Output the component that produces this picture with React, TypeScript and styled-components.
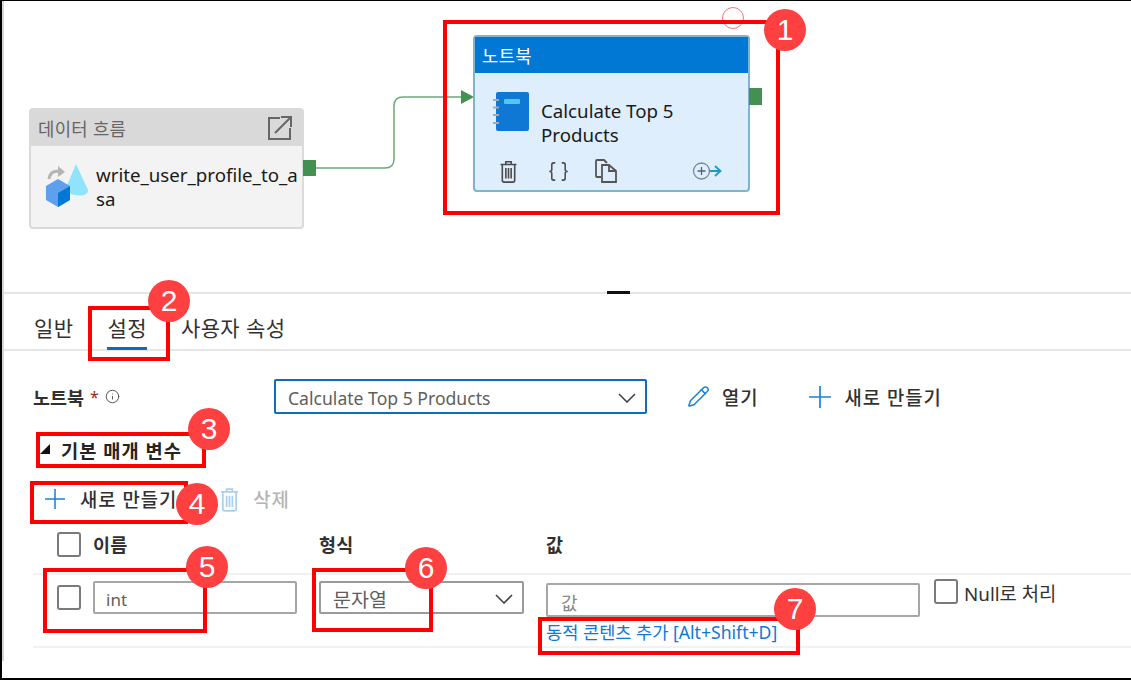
import React from "react";
import styled, { createGlobalStyle } from "styled-components";
import { Braces, Info, Pencil } from "lucide-react";

const FONT = `"Noto Sans", "Noto Sans CJK KR", sans-serif`;

const GlobalStyle = createGlobalStyle`
  html, body {
    margin: 0;
    padding: 0;
    background: #fff;
  }
  body {
    font-family: ${FONT};
    color: #252423;
  }
`;

// 최상단 프레임
const Frame = styled.div`
  position: relative;
  width: 1131px;
  height: 680px;
  box-sizing: border-box;
  border-top: 1px solid #000;
  border-bottom: 2px solid #000;
  border-left: 2px solid #000;
  overflow: hidden;
  background: #fff;
`;

const Inner = styled.div`
  height: 660px;
  border-left: 2px solid #d6d6d6;
`;

// 파이프라인 캔버스
const Canvas = styled.div`
  position: relative;
  height: 291px;
  border-bottom: 2px solid #e6e6e6;
`;

const Wire = styled.svg`
  position: absolute;
  left: -4px;
  top: -1px;
`;

const Splitter = styled.div`
  position: absolute;
  left: 603px;
  bottom: -2px;
  width: 23px;
  height: 3px;
  background: #111;
`;

const Node = styled.div<{ $x: number; $y: number; $w: number; $h: number; $border: string; $bg: string }>`
  position: absolute;
  left: ${(p) => p.$x}px;
  top: ${(p) => p.$y}px;
  width: ${(p) => p.$w}px;
  height: ${(p) => p.$h}px;
  box-sizing: border-box;
  border: 2px solid ${(p) => p.$border};
  border-radius: 4px;
  background: ${(p) => p.$bg};
`;

const NodeHeader = styled.div<{ $bg: string; $color: string }>`
  display: flex;
  align-items: center;
  justify-content: space-between;
  height: 36px;
  padding: 0 9px 0 7px;
  background: ${(p) => p.$bg};
  color: ${(p) => p.$color};
  font-size: 17.8px;
  letter-spacing: 0.3px;
`;

const NodeBody = styled.div<{ $gap: number; $pad: string }>`
  display: flex;
  align-items: flex-start;
  gap: ${(p) => p.$gap}px;
  padding: ${(p) => p.$pad};
`;

const NodeTitle = styled.div<{ $width: number; $mt: number; $break?: boolean }>`
  width: ${(p) => p.$width}px;
  margin-top: ${(p) => p.$mt}px;
  font-size: 18.7px;
  line-height: 24px;
  color: #1b1a19;
  word-break: ${(p) => (p.$break ? "break-all" : "normal")};
`;

const NodeActions = styled.div`
  position: absolute;
  left: 24px;
  right: 26px;
  bottom: 7px;
  display: flex;
  align-items: center;
  color: #4a4a4a;
`;

const ActionSlot = styled.div<{ $w: number }>`
  display: flex;
  width: ${(p) => p.$w}px;
`;

const Port = styled.div<{ $x: number; $y: number; $w: number; $h: number }>`
  position: absolute;
  left: ${(p) => p.$x}px;
  top: ${(p) => p.$y}px;
  width: ${(p) => p.$w}px;
  height: ${(p) => p.$h}px;
  background: #448f52;
`;

const Handle = styled.div`
  position: absolute;
  left: 718px;
  top: 6px;
  width: 22px;
  height: 22px;
  box-sizing: border-box;
  border: 1px solid #ff7070;
  border-radius: 50%;
`;

// 하단 설정 패널
const Tabs = styled.div`
  display: flex;
  gap: 34px;
  height: 57px;
  box-sizing: border-box;
  padding-left: 30px;
  border-bottom: 2px solid #e6e6e6;
`;

const Tab = styled.div<{ $active?: boolean }>`
  position: relative;
  padding-top: 20px;
  font-size: 21px;
  line-height: 28px;
  color: #323130;
  letter-spacing: 0.4px;
  &::after {
    content: "";
    display: ${(p) => (p.$active ? "block" : "none")};
    position: absolute;
    left: 0;
    right: 0;
    bottom: -1px;
    height: 3px;
    background: #0f6cbd;
  }
`;

const Form = styled.div`
  display: flex;
  flex-direction: column;
  padding: 28px 0 0 29px;
`;

const NotebookRow = styled.div`
  display: flex;
  align-items: center;
  height: 35px;
`;

const FieldLabel = styled.div`
  display: flex;
  align-items: center;
  gap: 6px;
  width: 241px;
  font-size: 18.5px;
  font-weight: 600;
  color: #323130;
`;

const Star = styled.span`
  color: #a4262c;
  font-size: 16px;
  font-weight: 400;
`;

const Select = styled.div<{ $w: number; $h: number; $size: number; $focus?: boolean }>`
  display: flex;
  align-items: center;
  justify-content: space-between;
  width: ${(p) => p.$w}px;
  height: ${(p) => p.$h}px;
  box-sizing: border-box;
  padding: 2px 9px 0 12px;
  border: ${(p) => (p.$focus ? "2px solid #0f6cbd" : "2px solid #9a9a9a")};
  border-radius: 2px;
  font-size: ${(p) => p.$size}px;
  color: #605e5c;
  background: #fff;
`;

const ToolButton = styled.div<{ $ml: number; $gap: number; $muted?: boolean }>`
  display: flex;
  align-items: center;
  gap: ${(p) => p.$gap}px;
  margin-left: ${(p) => p.$ml}px;
  font-size: 18.8px;
  font-weight: 500;
  letter-spacing: 1px;
  color: ${(p) => (p.$muted ? "#b5b5b5" : "#323130")};
`;

const SectionToggle = styled.div`
  display: flex;
  align-items: center;
  gap: 11px;
  height: 24px;
  margin-top: 23px;
  padding-left: 7px;
  font-size: 18.7px;
  font-weight: 600;
  letter-spacing: 1px;
  color: #252423;
`;

const Triangle = styled.div`
  width: 0;
  height: 0;
  border-style: solid;
  border-width: 0 0 10px 10px;
  border-color: transparent transparent #111 transparent;
`;

const Toolbar = styled.div`
  display: flex;
  align-items: center;
  height: 30px;
  margin-top: 23px;
  padding-left: 12px;
`;

const HeaderRow = styled.div`
  display: grid;
  grid-template-columns: 36px 226px 227px 388px 1fr;
  align-items: center;
  height: 49px;
  margin: 12px 0 0 29px;
  padding: 0 0 11px 24px;
  border-bottom: 2px solid #f1f1f1;
  box-sizing: border-box;
`;

const BodyRow = styled.div`
  display: grid;
  grid-template-columns: 36px 226px 227px 388px 1fr;
  align-items: start;
  height: 73px;
  box-sizing: border-box;
  margin-left: 29px;
  padding: 4px 0 0 24px;
  border-bottom: 2px solid #f1f1f1;
`;

const ColumnTitle = styled.div`
  font-size: 18.5px;
  font-weight: 600;
  letter-spacing: 0.3px;
  color: #323130;
`;

const CheckBox = styled.div<{ $mt?: number }>`
  width: 24px;
  height: 25px;
  margin-top: ${(p) => p.$mt ?? 0}px;
  box-sizing: border-box;
  border: 2px solid #7a7a7a;
  border-radius: 3px;
  background: #fff;
`;

const TextBox = styled.div<{ $w: number; $h: number; $mt: number; $pad: number; $size: number; $light?: boolean }>`
  display: flex;
  align-items: center;
  width: ${(p) => p.$w}px;
  height: ${(p) => p.$h}px;
  margin-top: ${(p) => p.$mt}px;
  box-sizing: border-box;
  padding: 3px 0 0 ${(p) => p.$pad}px;
  border: 2px solid #a6a6a6;
  border-radius: 2px;
  font-size: ${(p) => p.$size}px;
  color: ${(p) => (p.$light ? "#8a8a8a" : "#605e5c")};
`;

const SelectWrap = styled.div`
  margin-top: 2px;
`;

const ValueCell = styled.div`
  display: flex;
  flex-direction: column;
`;

const DynamicLink = styled.div`
  margin-top: 5px;
  font-size: 17.6px;
  line-height: 20px;
  color: #0f78d4;
  white-space: nowrap;
`;

const NullCell = styled.div`
  display: flex;
  align-items: flex-start;
  gap: 6px;
  font-size: 18.8px;
  line-height: 30px;
  color: #323130;
`;

// 빨간 주석 상자와 번호 배지
const Callout = styled.div<{ $x: number; $y: number; $w: number; $h: number }>`
  position: absolute;
  left: ${(p) => p.$x}px;
  top: ${(p) => p.$y}px;
  width: ${(p) => p.$w}px;
  height: ${(p) => p.$h}px;
  box-sizing: border-box;
  border: 4px solid #fe0000;
`;

const Badge = styled.div<{ $x: number; $y: number }>`
  position: absolute;
  left: ${(p) => p.$x - 21}px;
  top: ${(p) => p.$y - 21}px;
  width: 42px;
  height: 42px;
  display: flex;
  align-items: center;
  justify-content: center;
  border-radius: 50%;
  background: #fe4040;
  color: #fff;
  font-family: "Liberation Sans", sans-serif;
  font-size: 30px;
`;

const callouts = [
  { x: 441, y: 19, w: 337, h: 195 },
  { x: 86, y: 305, w: 82, h: 55 },
  { x: 34, y: 431, w: 170, h: 36 },
  { x: 28, y: 480, w: 158, h: 43 },
  { x: 41, y: 567, w: 164, h: 65 },
  { x: 310, y: 567, w: 121, h: 64 },
  { x: 536, y: 616, w: 262, h: 38 },
];

const badges = [
  { n: 1, x: 783, y: 29 },
  { n: 2, x: 167, y: 300 },
  { n: 3, x: 207, y: 428 },
  { n: 4, x: 195, y: 503 },
  { n: 5, x: 205, y: 566 },
  { n: 6, x: 424, y: 567 },
  { n: 7, x: 793, y: 608 },
];

function PlusIcon({ size }: { size: number }) {
  return (
    <svg width={size} height={size} viewBox="0 0 22 22">
      <path d="M11 0V22M0 11H22" stroke="#1a82d8" strokeWidth="1.7" fill="none" />
    </svg>
  );
}

function Chevron() {
  return (
    <svg width="18" height="10" viewBox="0 0 18 10">
      <path d="M1 1L9 9L17 1" stroke="#444" strokeWidth="1.6" fill="none" />
    </svg>
  );
}

function TrashIcon({ color, w, h }: { color: string; w: number; h: number }) {
  return (
    <svg width={w} height={h} viewBox="0 0 20 26" fill="none" stroke={color} strokeWidth="1.8">
      <path d="M1 5H19M7 5V2H13V5M3 5V23C3 24 4 25 5 25H15C16 25 17 24 17 23V5" />
      <path d="M7 9V21M10 9V21M13 9V21" />
    </svg>
  );
}

function CopyIcon() {
  return (
    <svg width="22" height="24" viewBox="0 0 22 24" fill="none" stroke="#555" strokeWidth="1.8">
      <path d="M6 18H2C1.4 18 1 17.6 1 17V2C1 1.4 1.4 1 2 1H9L12 4" />
      <path d="M7 6H14L21 12V23H7Z" />
      <path d="M14 6V12H21" />
    </svg>
  );
}

function AddActivityIcon() {
  return (
    <svg width="30" height="18" viewBox="0 0 30 18" fill="none">
      <circle cx="9.5" cy="9" r="8" stroke="#7c8790" strokeWidth="1.3" />
      <path d="M9.5 5V13M5.5 9H13.5" stroke="#56616a" strokeWidth="1.3" />
      <path d="M17 9H28M23 4L28.500 9L23 14" stroke="#1a9bc7" strokeWidth="1.8" />
    </svg>
  );
}

function ExternalIcon() {
  return (
    <svg width="26" height="26" viewBox="0 0 26 26" fill="none" stroke="#666" strokeWidth="2">
      <path d="M13 3H2V24H23V13" />
      <path d="M8 18L24 2M14 2H24V12" />
    </svg>
  );
}

function DataFlowIcon() {
  return (
    <svg width="44" height="44" viewBox="0 0 44 44">
      <path d="M4 16C5 9 10 7 16 9" stroke="#b5b5b5" strokeWidth="3" fill="none" />
      <path d="M13 3L20 9L13 14Z" fill="#b5b5b5" />
      <path d="M31 1L43 27C43 33 35 33 30 32C24 31 20 28 21 25Z" fill="#8fe3fb" />
      <path d="M13 16L25 23V37L13 44L1 37V23Z" fill="#5ea0ef" />
      <path d="M13 30L25 23V37L13 44Z" fill="#0078d4" />
    </svg>
  );
}

function NotebookIcon() {
  return (
    <svg width="36" height="40" viewBox="0 0 36 40">
      <rect x="3" y="0" width="33" height="39" rx="2" fill="#0f78d4" />
      <rect x="11" y="7" width="16" height="5" rx="1" fill="#50c8f0" />
      <path d="M0 8H6M0 15.500H6M0 23H6M0 31H6" stroke="#a9a9a9" strokeWidth="2.200" />
    </svg>
  );
}

export default function App() {
  return (
    <Frame>
      <GlobalStyle />
      <Inner>
        <Canvas>
          <Wire width="500" height="200" viewBox="0 0 500 200">
            <path
              d="M316 168H385Q394 168 394 159V106Q394 97 403 97H462"
              fill="none"
              stroke="#6aaa78"
              strokeWidth="1.500"
            />
            <path d="M461 90L474 97L461 104Z" fill="#448f52" />
          </Wire>
          <Node $x={25} $y={107} $w={275} $h={121} $border="#dadada" $bg="#f3f3f3">
            <NodeHeader $bg="#d9d9d9" $color="#666">
              데이터 흐름
              <ExternalIcon />
            </NodeHeader>
            <NodeBody $gap={7} $pad="17px 0 0 14px">
              <DataFlowIcon />
              <NodeTitle $width={203} $mt={0} $break>
                write_user_profile_to_asa
              </NodeTitle>
            </NodeBody>
          </Node>
          <Port $x={299} $y={159} $w={13} $h={16} />
          <Node $x={469} $y={34} $w={277} $h={157} $border="#7fb4cc" $bg="#deeefc">
            <NodeHeader $bg="#0078d4" $color="#fff">
              노트북
            </NodeHeader>
            <NodeBody $gap={12} $pad="19px 0 0 18px">
              <NotebookIcon />
              <NodeTitle $width={190} $mt={7}>
                Calculate Top 5 Products
              </NodeTitle>
            </NodeBody>
            <NodeActions>
              <ActionSlot $w={48}>
                <TrashIcon color="#4a4a4a" w={19} h={23} />
              </ActionSlot>
              <ActionSlot $w={48}>
                <Braces size={23} strokeWidth={1.6} />
              </ActionSlot>
              <ActionSlot $w={97}>
                <CopyIcon />
              </ActionSlot>
              <AddActivityIcon />
            </NodeActions>
          </Node>
          <Port $x={745} $y={87} $w={13} $h={17} />
          <Handle />
          <Splitter />
        </Canvas>
        <Tabs>
          <Tab>일반</Tab>
          <Tab $active>설정</Tab>
          <Tab>사용자 속성</Tab>
        </Tabs>
        <Form>
          <NotebookRow>
            <FieldLabel>
              노트북 <Star>*</Star>
              <Info size={15} strokeWidth={1.6} color="#555" />
            </FieldLabel>
            <Select $w={373} $h={35} $size={17.6} $focus>
              Calculate Top 5 Products
              <Chevron />
            </Select>
            <ToolButton $ml={40} $gap={12}>
              <Pencil size={23} strokeWidth={1.6} color="#1a82d8" />
              열기
            </ToolButton>
            <ToolButton $ml={50} $gap={14}>
              <PlusIcon size={22} />
              새로 만들기
            </ToolButton>
          </NotebookRow>
          <SectionToggle>
            <Triangle />
            기본 매개 변수
          </SectionToggle>
          <Toolbar>
            <ToolButton $ml={0} $gap={15}>
              <PlusIcon size={20} />
              새로 만들기
            </ToolButton>
            <ToolButton $ml={43} $gap={14} $muted>
              <TrashIcon color="#a9d0f0" w={19} h={25} />
              삭제
            </ToolButton>
          </Toolbar>
        </Form>
        <HeaderRow>
          <CheckBox />
          <ColumnTitle>이름</ColumnTitle>
          <ColumnTitle>형식</ColumnTitle>
          <ColumnTitle>값</ColumnTitle>
        </HeaderRow>
        <BodyRow>
          <CheckBox $mt={6} />
          <TextBox $w={204} $h={33} $mt={2} $pad={11} $size={17}>
            int
          </TextBox>
          <SelectWrap>
            <Select $w={205} $h={33} $size={19.5}>
              문자열
              <Chevron />
            </Select>
          </SelectWrap>
          <ValueCell>
            <TextBox $w={374} $h={34} $mt={4} $pad={13} $size={18} $light>
              값
            </TextBox>
            <DynamicLink>동적 콘텐츠 추가 [Alt+Shift+D]</DynamicLink>
          </ValueCell>
          <NullCell>
            <CheckBox />
            Null로 처리
          </NullCell>
        </BodyRow>
      </Inner>
      {callouts.map((c, i) => (
        <Callout key={i} $x={c.x} $y={c.y} $w={c.w} $h={c.h} />
      ))}
      {badges.map((b) => (
        <Badge key={b.n} $x={b.x} $y={b.y}>
          {b.n}
        </Badge>
      ))}
    </Frame>
  );
}
